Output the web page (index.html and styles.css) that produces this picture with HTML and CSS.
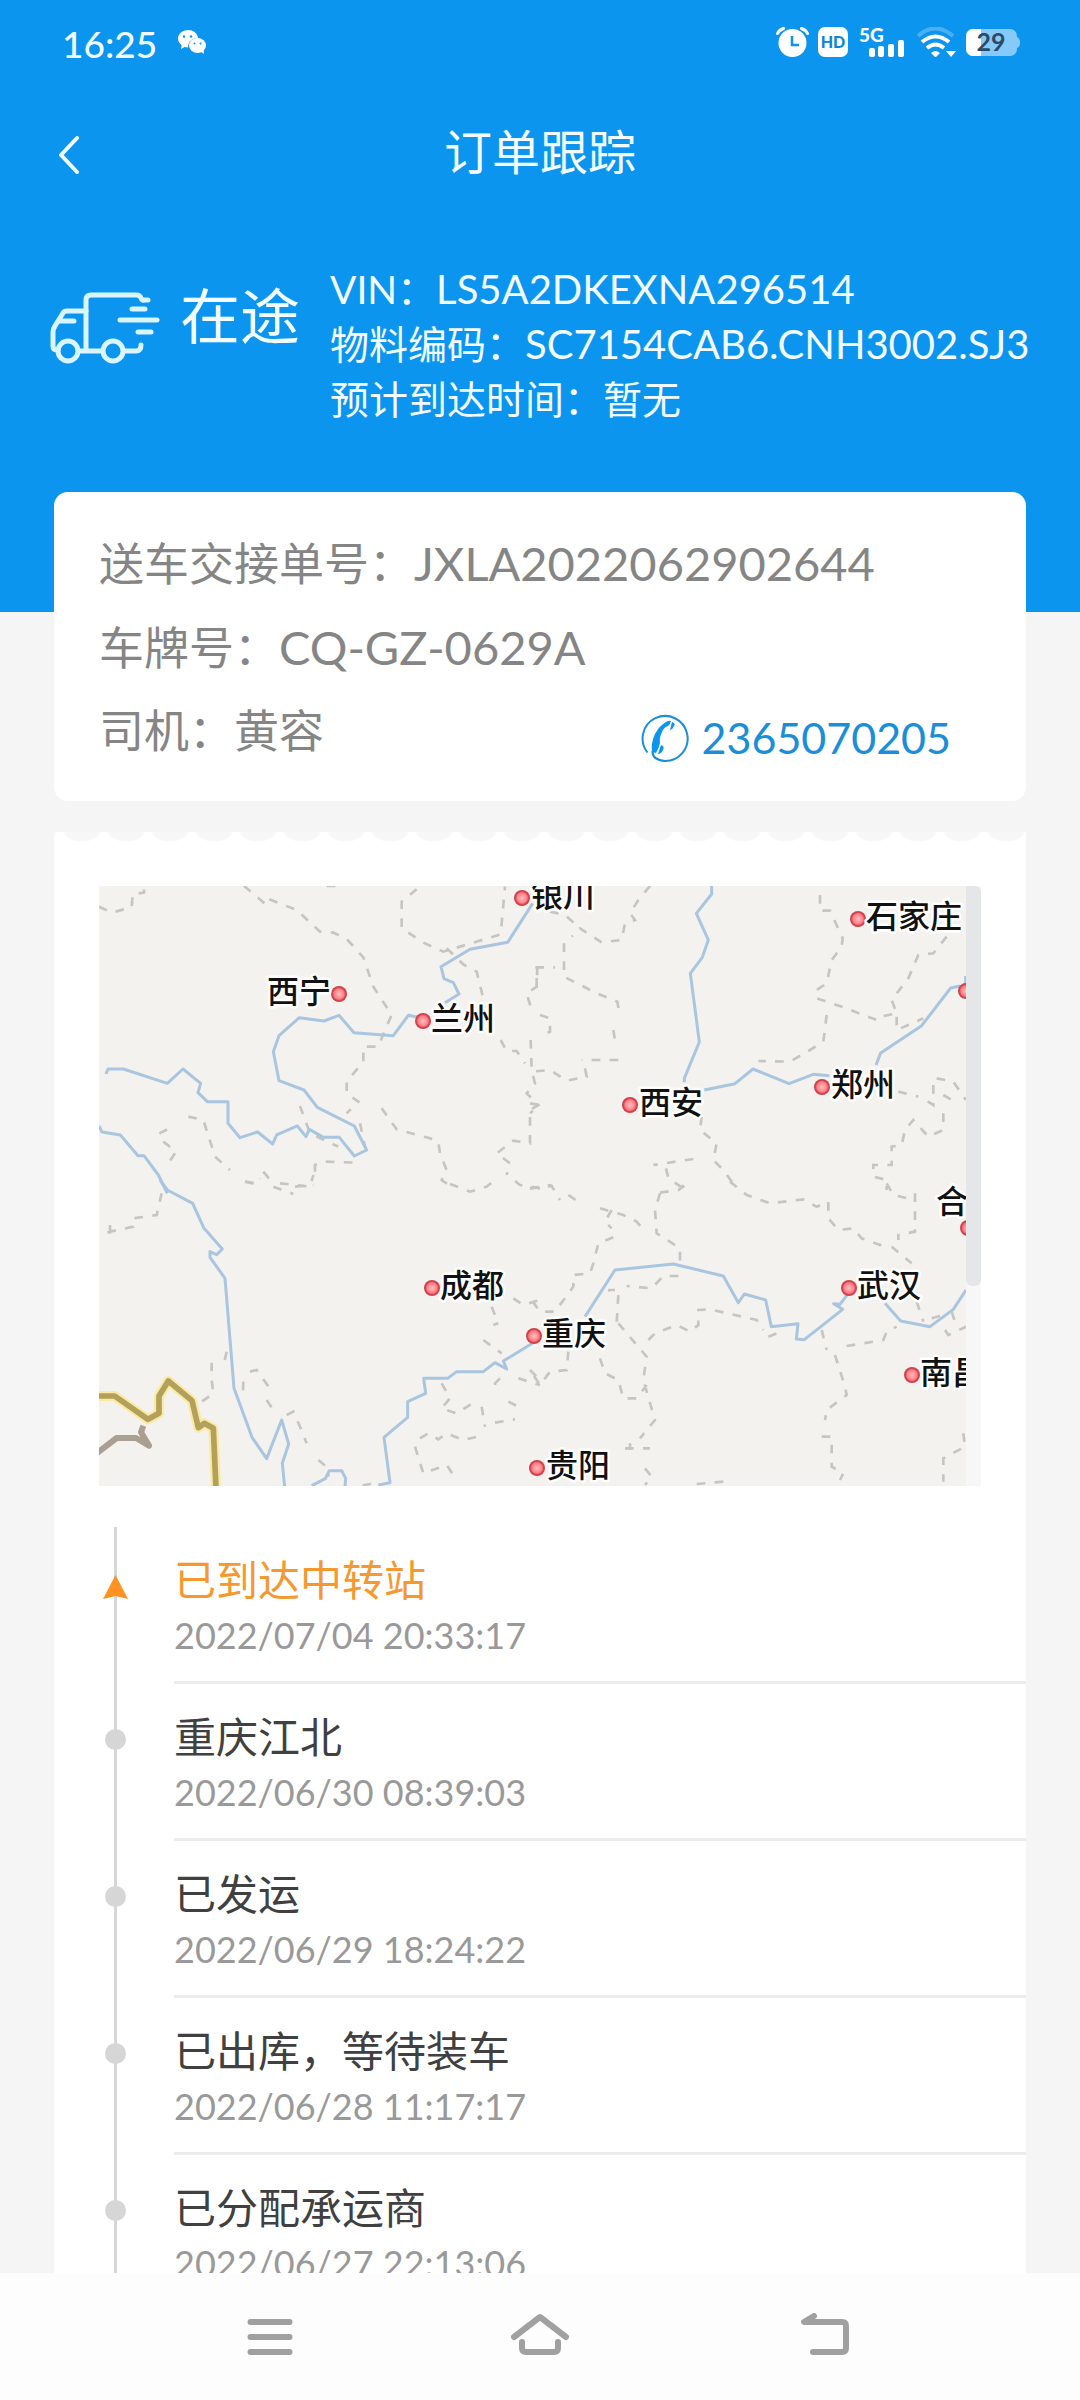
FILE: index.html
```html
<!DOCTYPE html>
<html lang="zh-CN">
<head>
<meta charset="utf-8">
<meta name="viewport" content="width=device-width, initial-scale=1">
<title>订单跟踪</title>
<link rel="stylesheet" href="styles.css">
</head>
<body>
<div class="app">
  <main class="screen">
    <header class="hero">
      <div class="status-bar">
        <span class="clock">16:25</span>
        <svg class="wechat" width="28" height="24" viewBox="0 0 28 24" aria-hidden="true">
          <path fill="#fff" d="M10 0C4.500 0 0 3.800 0 8.500c0 2.700 1.400 5 3.700 6.600L3 19l3.600-2c1.100.3 2.200.4 3.400.4C10 12 14 8 20 8 19.500 3.500 15.500 0 10 0z"/>
          <ellipse cx="19.500" cy="15.500" rx="8.500" ry="7.500" fill="#fff"/>
          <path fill="#fff" d="M22 21l4 3-.5-5z"/>
          <g fill="#0b95ee"><circle cx="6" cy="6.500" r="1.200"/><circle cx="13" cy="6.500" r="1.200"/><circle cx="16.500" cy="13.500" r="1"/><circle cx="22.500" cy="13.500" r="1"/></g>
        </svg>
        <div class="status-icons">
          <svg width="33" height="30" viewBox="0 0 33 30" aria-hidden="true">
            <circle cx="16.500" cy="16" r="14" fill="#fff"/>
            <path d="M1.500 6.500Q3 3 7.500 1.500M31.500 6.500Q30 3 25.500 1.500" fill="none" stroke="#fff" stroke-width="3" stroke-linecap="round"/>
            <path d="M16 9v9h7" fill="none" stroke="#0b95ee" stroke-width="2.500"/>
          </svg>
          <svg class="hd" width="30" height="30" viewBox="0 0 30 30" aria-hidden="true">
            <rect width="30" height="30" rx="7" fill="#fff"/>
            <text x="15" y="21" class="hd-text">HD</text>
          </svg>
          <svg class="signal" width="46" height="30" viewBox="0 0 46 30" aria-hidden="true">
            <text x="0" y="15" class="net-text">5G</text>
            <g fill="#fff"><rect x="10" y="21" width="6" height="9" rx="2"/><rect x="19" y="19" width="6" height="11" rx="2"/><rect x="29" y="17" width="6" height="13" rx="2"/><rect x="39" y="13" width="6" height="17" rx="2"/></g>
          </svg>
          <svg class="wifi" width="40" height="30" viewBox="0 0 40 30" aria-hidden="true">
            <g fill="none" stroke="#fff" stroke-width="4">
              <path d="M1 9Q18-6 36 9" opacity=".25"/>
              <path d="M5 15Q18.500 4 32 15"/><path d="M10 21Q18.500 14 27 21"/>
            </g>
            <path d="M14 26q4.500-4 9 0l-4.500 4.500zM29 24h10l-5 6z" fill="#fff"/>
          </svg>
          <svg class="battery" width="54" height="28" viewBox="0 0 54 28" aria-hidden="true">
            <rect width="51" height="27" rx="7" fill="#86cafa"/>
            <path d="M51 8q3 1 3 5.500t-3 5.500z" fill="#86cafa"/>
            <path d="M7 0h8v27H7a7 7 0 0 1-7-7V7a7 7 0 0 1 7-7z" fill="#fff"/>
            <text x="25" y="22" class="battery-text">29</text>
          </svg>
        </div>
      </div>
      <div class="title-bar">
        <button class="back" type="button" aria-label="返回">
          <svg width="22" height="38" viewBox="0 0 22 38" aria-hidden="true"><path d="M19 2L3 19l16 17" fill="none" stroke="#f2fcff" stroke-width="4" stroke-linecap="round" stroke-linejoin="round"/></svg>
        </button>
        <h1 class="title">订单跟踪</h1>
      </div>
      <section class="summary">
        <svg class="truck" width="110" height="72" viewBox="0 0 110 72" aria-hidden="true">
          <g fill="none" stroke="#d9f5ff" stroke-width="5" stroke-linecap="round" stroke-linejoin="round">
            <path d="M36 56V8q0-5 5-5h45q4 0 5 3t3 2h4"/>
            <path d="M36 19H17q-3 0-4 2L5 34q-2 3-2 6v14q0 4 4 4h1"/>
            <circle cx="18" cy="59" r="10"/><circle cx="63" cy="59" r="10"/>
            <path d="M29 59h23M74 59h12q5 0 5-6M9 29h15M82 17h13M70 28h37M88 40h13"/>
          </g>
        </svg>
        <strong class="state">在途</strong>
        <div class="facts">
          <p>VIN：<span class="code">LS5A2DKEXNA296514</span></p>
          <p>物料编码：<span class="code">SC7154CAB6.CNH3002.SJ3</span></p>
          <p>预计到达时间：暂无</p>
        </div>
      </section>
    </header>

    <section class="card">
      <p class="row"><span>送车交接单号：<span class="number">JXLA2022062902644</span></span></p>
      <p class="row"><span>车牌号：<span class="number">CQ-GZ-0629A</span></span></p>
      <div class="row">
        <span>司机：黄容</span>
        <a class="phone" href="tel:2365070205">
          <svg width="48" height="48" viewBox="0 0 48 48" aria-hidden="true">
            <path d="M6.500 38.500A22.500 22.500 0 1 1 24 47Q11 46 11.500 37" fill="none" stroke="#1a8ed6" stroke-width="2"/>
            <path d="M25 8q3-2 5-1-1 4-3 5-4 1-6 6-3 6-2 11-1 5-4 10l-4-1Q10 28 14 20q5-9 11-12z" fill="#0b95ee"/>
            <path d="M31 8q4 1 2 4-1 3-4 4zM20 31q4 1 2 5t-5 4z" fill="#0b95ee"/>
          </svg>
          <span>2365070205</span>
        </a>
      </div>
    </section>

    <section class="ticket">
      <div class="map-view">
        <svg class="map" viewBox="0 0 867 600" preserveAspectRatio="xMinYMin slice" role="img" aria-label="运输地图">
          <defs>
            <radialGradient id="pin"><stop offset="0" stop-color="#ffc0c0"/><stop offset=".65" stop-color="#ff7b83"/><stop offset=".8" stop-color="#d8434f"/><stop offset="1" stop-color="#c4414b"/></radialGradient>
          </defs>
          <!-- north-west tile -->
          <g transform="translate(-19 -16) scale(.33333)">
            <path class="province" d="M57 110L95 128 155 112 158 72 192 68V48M492 48L530 80 575 118M568 88L650 120 720 185 760 188 800 207 850 262 880 350 935 435 915 480 895 530 850 530V575L800 635V670L835 695 800 730M1010 58L965 95V175L1030 218 1090 245 1262 193 1275 50M1100 235L1150 283 1190 305 1208 378M1262 510L1280 543H1310L1335 580M1372 290L1370 350 1340 370 1355 420M1352 510L1355 600 1365 640 1340 670 1375 705 1350 720V820L1300 812 1250 850 1290 880 1280 915M905 715L950 778 1050 805 1075 815 1080 850 1100 900 1085 930 1120 955M238 790L282 768M325 740L370 750 405 860 450 900M495 935L530 942 540 925M550 905L575 935M660 708L690 790 775 830M705 905V885L735 875 830 878M250 815L288 845 255 895M600 940L690 950 700 915M1380 955L1320 945 1290 920M740 48H780M840 760L855 830"/>
            <path class="river" d="M78 612L84 597H130L262 640 309 597 362 640 354 668 382 695H444V760L480 803 533 786 578 822 590 795 652 768 678 800 688 778 730 802H778L823 858 860 840 823 768 712 712 672 660 597 632 580 545 597 497 658 443 732 453 777 436 822 488 940 497 985 436 1028 445M1095 398L1137 372 1120 338 1092 326 1083 290 1170 238 1283 217 1358 100M57 768L66 786 121 795 174 857H192L235 915 262 970"/>
          </g>
          <!-- north-east tile -->
          <g transform="translate(431 -16) scale(.33333)">
            <path class="province" d="M360 48L325 90 300 130 315 150 285 160 275 210 215 217 150 175 125 200M60 125L105 135 150 175M102 220V320L200 370 262 395 270 440M250 480L258 530M265 570H155M165 595L170 620 110 632 60 600 5 605M20 350V292H75M30 435L60 445V485L30 500M870 75V122H900L938 205 935 230 905 270 890 340 860 360V385L940 412 1040 450M890 435L880 515 840 540 780 575 685 573M1250 200L1210 250 1165 255 1135 325 1085 390 1100 430 1060 438M1100 440V480L1180 445M1105 665L1165 680M1220 625L1270 635 1308 690M1210 645V705L1170 680M1240 675L1265 690M1240 730V780L1195 800 1150 750 1125 780 1115 825 1085 830V885H1030V920L1070 930V960M515 740L510 780 560 820 550 870 580 900 620 955M490 867L370 885M408 895L415 925 460 955M0 700L28 705 0 730M0 955L65 945"/>
            <path class="river" d="M545 48V72L499 130 535 210 517 262 481 310 508 516 463 625V637M523 660L615 641 669 597 777 641 850 613 898 617M1038 585L1052 549 1175 467 1262 354 1290 348M1307 348V318"/>
          </g>
          <!-- south-west tile -->
          <g transform="translate(-19 294) scale(.33333)">
            <path class="province" d="M245 40L230 105 160 115V140L90 155 68 160M90 135V165M495 5L535 12M580 20L640 42M645 20L700 15M1110 12L1170 35 1220 20 1250 -5M1300 355L1330 375 1380 360M1235 380L1255 430 1240 435M1210 480L1265 520M440 515L430 560M395 548V600L400 640 370 662 350 650M490 605L488 655M510 575L530 570 580 640M560 660L580 690M620 705L640 695 660 740 680 790M715 840L745 865V890M1260 595L1245 610 1250 635M1085 610L1110 655 1085 685 1130 700 1180 668M1205 680L1215 740M1285 665L1325 685M1245 728L1305 718M1020 775L1045 760 1075 778 1100 760 1150 780 1200 768M1005 800L1030 880 1100 855 1130 900M1315 595L1380 615M1350 570L1370 590M848 917L880 910"/>
            <path class="river" d="M240 0L262 30 338 70 372 145 427 207 410 224 390 215V232L435 295 462 625 516 772 560 836 605 720 626 792 607 850 614 920M695 917L736 896 748 872H785L797 895 795 920M895 915L930 908 912 772 983 712V665L1037 640 1031 595H1103L1130 575H1210L1245 548 1280 567 1270 543 1362 487"/>
            <path class="frontier-low" d="M50 820L110 774H168L207 797 183 757 190 737"/>
            <path class="frontier-glow" d="M50 648H104L204 718 237 700V648L265 603 336 662 355 743 373 730 400 745 408 925"/>
            <path class="frontier" d="M50 648H104L204 718 237 700V648L265 603 336 662 355 743 373 730 400 745 408 925"/>
          </g>
          <!-- south-east tile -->
          <g transform="translate(431 294) scale(.33333)">
            <path class="province" d="M0 25L65 18 90 60M115 45L160 75M210 85L280 105 320 125 345 155M245 90L225 125 245 145M250 172L205 190 190 250 180 280 130 285V320L75 395H30L5 360M390 40L375 90 380 160 450 205V250M390 38L445 30 460 20 440 0M445 288H400L365 325 290 318M255 330L235 330 265 345 260 430 240 435M265 430L350 530 340 600 375 720 330 775M600 5L650 45 720 70 820 58 860 80 895 65V115L925 150 970 145 995 175 1050 195 1065 180M1070 10L1090 45 1155 60M1155 40V155L1105 165V180M1085 200L1145 250M1160 365L1180 425M1205 415L1230 408M1265 395L1275 425M1245 450L1255 465 1308 440M355 480L375 460 440 435 480 455 505 435V390L540 388 680 420 700 450M715 470L765 450M875 450L890 510M950 498L1060 480 1070 455 1100 440M915 525L945 620 950 645 890 690 885 720M875 770H905V860L940 880 930 900M115 515L110 570 60 575 30 615 0 570M210 535L225 580 265 600 280 655H320L350 615M285 805H360M300 790V810M345 865L365 890 345 915M500 912L580 905M1300 760L1305 800 1240 835V905"/>
            <path class="river" d="M165 410L255 270 430 252 580 288 625 368 643 342 707 360 724 440 804 431 799 477 823 479 938 388 911 371 930 373 955 340M1065 370L1112 423 1200 440 1270 388 1308 330"/>
          </g>
          <g class="pins">
            <circle cx="240" cy="108" r="8"/><circle cx="324" cy="135" r="8"/><circle cx="423" cy="12" r="8"/>
            <circle cx="759" cy="33" r="8"/><circle cx="867" cy="105" r="8"/><circle cx="531" cy="219" r="8"/>
            <circle cx="723" cy="201" r="8"/><circle cx="333" cy="402" r="8"/><circle cx="435" cy="450" r="8"/>
            <circle cx="438" cy="582" r="8"/><circle cx="750" cy="402" r="8"/><circle cx="869" cy="342" r="8"/>
            <circle cx="813" cy="489" r="8"/>
          </g>
          <g class="cities">
            <text x="168" y="117">西宁</text><text x="332" y="144">兰州</text><text x="432" y="21">银川</text>
            <text x="767" y="42">石家庄</text><text x="540" y="228">西安</text><text x="732" y="210">郑州</text>
            <text x="341" y="411">成都</text><text x="443" y="459">重庆</text><text x="447" y="591">贵阳</text>
            <text x="758" y="411">武汉</text><text x="821" y="498">南昌</text><text x="837" y="327">合</text>
          </g>
        </svg>
        <div class="map-scroll"><div class="map-thumb"></div></div>
      </div>

      <ol class="timeline">
        <li class="step step-current"><h2>已到达中转站</h2><time datetime="2022-07-04T20:33:17">2022/07/04 20:33:17</time></li>
        <li class="step"><h2>重庆江北</h2><time datetime="2022-06-30T08:39:03">2022/06/30 08:39:03</time></li>
        <li class="step"><h2>已发运</h2><time datetime="2022-06-29T18:24:22">2022/06/29 18:24:22</time></li>
        <li class="step"><h2>已出库，等待装车</h2><time datetime="2022-06-28T11:17:17">2022/06/28 11:17:17</time></li>
        <li class="step"><h2>已分配承运商</h2><time datetime="2022-06-27T22:13:06">2022/06/27 22:13:06</time></li>
      </ol>
    </section>
  </main>

  <nav class="system-nav">
    <button type="button" aria-label="最近任务"><svg width="80" height="48" viewBox="0 0 80 48" aria-hidden="true"><path d="M20.500 9h39M20.500 24h39M20.500 39h39"/></svg></button>
    <button type="button" aria-label="主屏幕"><svg width="80" height="48" viewBox="0 0 80 48" aria-hidden="true"><path d="M14 24L40 4l26 20M22 29v6q0 4 4 4h28q4 0 4-4v-6"/></svg></button>
    <button type="button" aria-label="返回上一级"><svg width="80" height="48" viewBox="0 0 80 48" aria-hidden="true"><path d="M44 3L34 9h38q4 0 4 4v22q0 4-4 4H43"/></svg></button>
  </nav>
</div>
</body>
</html>
```
FILE: styles.css
```css
* { box-sizing: border-box; }

body {
  margin: 0;
  font-family: Lato, "Noto Sans CJK SC", sans-serif;
  font-weight: 400;
  color: #404040;
  background: #f5f5f5;
}

h1, h2, p, ol { margin: 0; padding: 0; font-weight: 400; }
button { padding: 0; border: 0; background: none; }
svg { display: block; flex: none; }

.app { display: flex; flex-direction: column; height: 100vh; }
.screen { flex: 1; min-height: 0; overflow-y: auto; scrollbar-width: none; }

/* header */
.hero { padding-bottom: 185px; background: #0b95ee; color: #f2fcff; }

.status-bar { display: flex; align-items: center; height: 84px; padding: 0 60px 0 62px; }
.clock { font-size: 37px; font-weight: 500; line-height: 88px; margin-top: 4px; }
.wechat { margin-left: 21px; }
.status-icons { display: flex; align-items: center; margin-left: auto; gap: 9px; }
.signal { margin-left: 2px; overflow: visible; }
.wifi { margin-left: 3px; }
.battery { margin-top: 2px; overflow: visible; }
.hd-text { font-size: 16px; font-weight: 900; fill: #0b85d6; text-anchor: middle; }
.net-text { font-size: 19px; font-weight: 900; fill: #fff; }
.battery-text { font-size: 25px; font-weight: 700; fill: #2c4a68; text-anchor: middle; }

.title-bar { display: grid; grid-template-columns: 1fr auto 1fr; align-items: center; height: 136px; padding: 0 58px; }
.back { justify-self: start; margin-top: 6px; }
.title { font-size: 48px; line-height: 72px; }

.summary { display: flex; align-items: flex-start; padding: 42px 30px 0 50px; white-space: nowrap; }
.truck { margin-top: 30px; }
.state { margin: 18px 30px 0 20px; font-size: 60px; font-weight: 400; line-height: 72px; }
.facts { font-size: 39px; line-height: 55px; }
.facts p { height: 55px; }
.code { font-size: 40px; }

/* delivery card */
.card {
  position: relative;
  margin: -120px 54px 0;
  padding: 29px 45px 28px;
  border-radius: 14px;
  background: #fff;
  color: #858585;
  font-size: 45px;
}
.row { display: flex; align-items: center; justify-content: space-between; height: 84px; line-height: 84px; white-space: nowrap; }
.number { font-size: 47px; }
.phone { display: flex; align-items: center; gap: 13px; padding: 14px 30px 0 0; color: #1a8ed6; font-size: 43px; line-height: 48px; text-decoration: none; }

/* ticket with a scalloped top edge */
.ticket {
  margin: 31px 54px 0;
  padding-top: 54px;
  background: radial-gradient(ellipse 19px 10px at 22px 0, #f7f7f7 85%, #fff 100%) 6px 0 / 44px 12px repeat-x, #fff;
}
.map-view { display: flex; height: 600px; margin: 0 45px; }
.map { flex: 1; min-width: 0; height: 600px; background: #f3f2ee; }
.map-scroll { width: 15px; background: #f7f7f8; }
.map-thumb { height: 400px; border-radius: 0 6px 6px 6px; background: #e5e6e8; }

.province { fill: none; stroke: #c6c5c2; stroke-width: 8; stroke-dasharray: 26 28; }
.river { fill: none; stroke: #a9c5df; stroke-width: 9; stroke-linejoin: round; }
.frontier-low { fill: none; stroke: #aa9f90; stroke-width: 18; stroke-linejoin: round; }
.frontier-glow { fill: none; stroke: #faeaa4; stroke-width: 30; stroke-linejoin: round; }
.frontier { fill: none; stroke: #b3a05a; stroke-width: 17; stroke-linejoin: round; }
.pins { fill: url(#pin); }
.cities { font: 500 32px "Noto Sans CJK SC", sans-serif; fill: #111; stroke: #fff; stroke-width: 5px; stroke-linejoin: round; paint-order: stroke; }

/* timeline */
.timeline { margin: 41px 0 0 60px; border-left: 3px solid #d6d6d6; list-style: none; }
.step { position: relative; height: 157px; margin-left: 57px; padding-top: 26px; border-bottom: 3px solid #ececec; }
.step h2 { font-size: 42px; line-height: 54px; }
.step time { display: block; color: #999; font-size: 36px; line-height: 56px; }
.step::before {
  content: "";
  position: absolute;
  left: -69px;
  top: 45px;
  width: 21px;
  height: 21px;
  border-radius: 50%;
  background: #d6d6d6;
}
.step-current h2 { color: #f5982f; }
.step-current::before {
  left: -71px;
  top: 48px;
  width: 25px;
  height: 24px;
  border-radius: 0;
  background: #ff9220;
  clip-path: polygon(50% 0, 100% 100%, 50% 88%, 0 100%);
}

/* system navigation */
.system-nav { display: grid; grid-template-columns: repeat(3, 1fr); place-items: center; height: 127px; padding: 0 12.5%; background: #fdfdfd; }
.system-nav svg { fill: none; stroke: #a0a0a0; stroke-width: 6; stroke-linecap: round; stroke-linejoin: round; }
```
